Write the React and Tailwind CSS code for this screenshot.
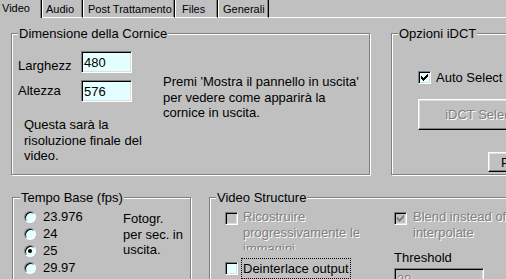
const disabledText = 'text-[#808080] [text-shadow:1px_1px_0_#fff]';

function Group({ title, className, labelLeft = 'left-[6px]', children }) {
  return (
    <div className={`relative shrink-0 border border-[#808080] shadow-[inset_1px_1px_0_#fff,1px_1px_0_#fff] ${className}`}>
      <span className={`absolute -top-[8px] ${labelLeft} bg-[#c0c0c0] px-[1px] leading-[15px] whitespace-nowrap`}>
        {title}
      </span>
      {children}
    </div>
  );
}

function Field({ value, disabled, className }) {
  return (
    <div
      className={`flex items-center pl-[2px] border border-t-[#808080] border-l-[#808080] border-b-white border-r-white shadow-[inset_1px_1px_0_#000,inset_-1px_-1px_0_#dfdfdf] ${
        disabled ? 'bg-[#c0c0c0] ' + disabledText : 'bg-[#e4ffff]'
      } ${className}`}
    >
      {value}
    </div>
  );
}

// 7x7 pixel check mark, like the old Windows one
function CheckMark({ color }) {
  const cols = [2, 3, 4, 3, 2, 1, 0];
  return (
    <svg width="7" height="7" viewBox="0 0 7 7" shapeRendering="crispEdges">
      {cols.map((y, x) => (
        <rect key={x} x={x} y={y} width="1" height="3" fill={color} />
      ))}
    </svg>
  );
}

function Check({ checked, disabled, className = '' }) {
  return (
    <div
      className={`w-[13px] h-[13px] shrink-0 flex items-center justify-center border border-t-[#808080] border-l-[#808080] border-b-white border-r-white shadow-[inset_1px_1px_0_#000,inset_-1px_-1px_0_#dfdfdf] ${
        disabled ? 'bg-[#c0c0c0]' : 'bg-[#e4ffff]'
      } ${className}`}
    >
      {checked && <CheckMark color={disabled ? '#808080' : '#000'} />}
    </div>
  );
}

function Radio({ checked }) {
  return (
    <div className="w-[12px] h-[12px] shrink-0 rounded-full flex items-center justify-center border border-t-[#808080] border-l-[#808080] border-b-white border-r-white shadow-[inset_1px_1px_0_#000] bg-[#e4ffff]">
      {checked && <div className="w-[4px] h-[4px] rounded-full bg-black" />}
    </div>
  );
}

function Button({ children, className }) {
  return (
    <div
      className={`flex items-center justify-center shrink-0 border border-t-white border-l-white border-b-black border-r-black shadow-[inset_-1px_-1px_0_#808080,inset_1px_1px_0_#dfdfdf] ${className}`}
    >
      {children}
    </div>
  );
}

function Tab({ children, className }) {
  return (
    <div
      className={`h-[18px] shrink-0 pt-[3px] border-l border-r border-b border-l-white border-r-black border-b-white shadow-[inset_-1px_0_0_#808080] whitespace-nowrap ${className}`}
    >
      {children}
    </div>
  );
}

const rates = [
  { label: '23.976' },
  { label: '24' },
  { label: '25', checked: true },
  { label: '29.97' },
  { label: '30' },
];

export default function App() {
  return (
    <div className="w-[506px] h-[279px] overflow-hidden bg-[#c0c0c0] font-['Liberation_Sans',Arial,sans-serif] text-[13px] leading-[15px] text-black">
      {/* tab strip */}
      <div className="flex h-[18px] text-[11px] leading-[13px]">
        <div className="w-[42px] h-[18px] shrink-0 pl-[2px] pt-[2px] border-r border-r-black shadow-[inset_-1px_0_0_#808080]">
          Video
        </div>
        <Tab className="w-[41px] pl-[3px]">Audio</Tab>
        <Tab className="w-[92px] pl-[4px]">Post Trattamento</Tab>
        <Tab className="w-[43px] pl-[6px]">Files</Tab>
        <Tab className="w-[51px] pl-[4px]">Generali</Tab>
        <div className="flex-1 border-b border-b-white" />
      </div>

      {/* top row */}
      <div className="flex mt-[15px]">
        <Group title="Dimensione della Cornice" className="ml-[11px] w-[359px] h-[142px]">
          <div className="flex">
            <div className="w-[120px] shrink-0">
              <div className="flex items-start mt-[17px]">
                <span className="w-[69px] pl-[6px] mt-[7px]">Larghezz</span>
                <Field value="480" className="w-[51px] h-[22px]" />
              </div>
              <div className="flex items-start mt-[7px]">
                <span className="w-[69px] pl-[6px] mt-[3px]">Altezza</span>
                <Field value="576" className="w-[51px] h-[22px]" />
              </div>
              <p className="pl-[12px] mt-[15px] leading-[15.5px] whitespace-nowrap">
                Questa sarà la
                <br />
                risoluzione finale del
                <br />
                video.
              </p>
            </div>
            <p className="ml-[31px] mt-[40px] leading-[15.5px] whitespace-nowrap">
              Premi 'Mostra il pannello in uscita'
              <br />
              per vedere come apparirà la
              <br />
              cornice in uscita.
            </p>
          </div>
        </Group>

        <Group title="Opzioni iDCT" className="ml-[21px] w-[200px] h-[142px]">
          <div className="pl-[26px] pt-[36px]">
            <div className="flex items-center gap-[5px]">
              <Check checked />
              <span>Auto Select</span>
            </div>
            <Button className={`mt-[14px] w-[135px] h-[31px] ${disabledText}`}>iDCT Selector</Button>
            <Button className="ml-[70px] mt-[22px] w-[60px] h-[20px]">Prova</Button>
          </div>
        </Group>
      </div>

      {/* bottom row */}
      <div className="flex mt-[22px]">
        <Group title="Tempo Base (fps)" labelLeft="left-[7px]" className="ml-[12px] w-[179px] h-[120px]">
          <div className="flex">
            <div className="w-[110px] shrink-0 pl-[11px] pt-[10px]">
              {rates.map((r) => (
                <div key={r.label} className="flex items-center gap-[7px] h-[17px]">
                  <Radio checked={r.checked} />
                  <span>{r.label}</span>
                </div>
              ))}
            </div>
            <p className="mt-[13px] leading-[15.5px] whitespace-nowrap">
              Fotogr.
              <br />
              per sec. in
              <br />
              uscita.
            </p>
          </div>
        </Group>

        <Group title="Video Structure" className="ml-[18px] w-[400px] h-[120px]">
          <div className="flex mt-[11px] ml-[15px]">
            <div className="w-[169px] shrink-0">
              <div className="flex items-start">
                <Check disabled className="mt-[3px]" />
                <p className={`ml-[5px] h-[41px] overflow-hidden leading-[16px] ${disabledText}`}>
                  Ricostruire
                  <br />
                  progressivamente le
                  <br />
                  immagini
                </p>
              </div>
              <div className="flex items-center mt-[8px] h-[21px]">
                <Check />
                <span className="ml-[3px] h-[21px] px-[1px] flex items-center border border-dotted border-black whitespace-nowrap">
                  Deinterlace output
                </span>
              </div>
            </div>
            <div className="shrink-0">
              <div className="flex items-start">
                <Check checked disabled className="mt-[3px]" />
                <p className={`ml-[6px] leading-[16px] whitespace-nowrap ${disabledText}`}>
                  Blend instead of
                  <br />
                  interpolate
                </p>
              </div>
              <p className="mt-[9px]">Threshold</p>
              <Field value="30" disabled className="mt-[3px] w-[90px] h-[22px]" />
            </div>
          </div>
        </Group>
      </div>
    </div>
  );
}
